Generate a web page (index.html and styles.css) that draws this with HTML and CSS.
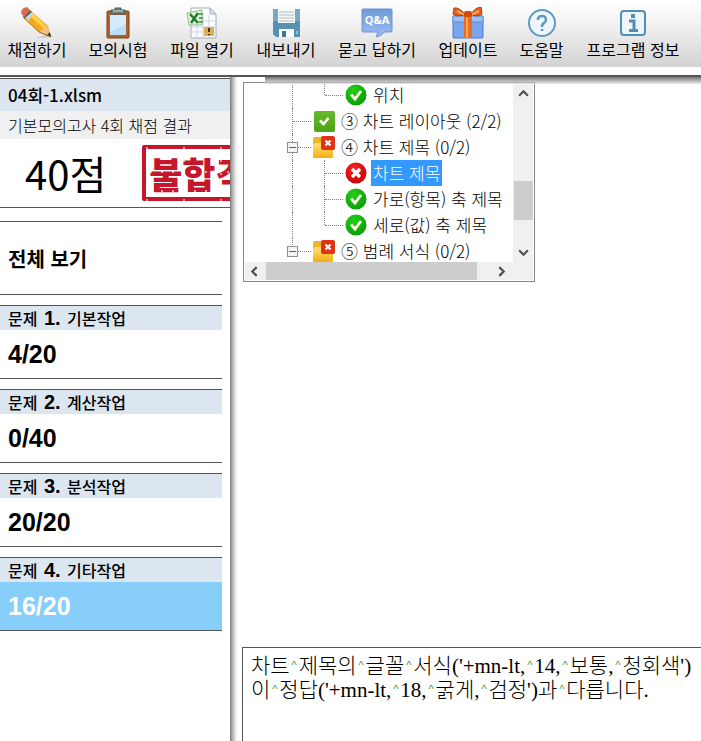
FILE: index.html
```
<!DOCTYPE html>
<html lang="ko">
<head>
  <meta charset="UTF-8"/>
  <meta name="viewport" content="width=device-width, initial-scale=1.0"/>
  <title>채점 결과</title>
  <link rel="stylesheet" href="styles.css">
</head>
<body>
  <!-- shared symbols for the result tree -->
  <svg class="defs" width="0" height="0" aria-hidden="true">
    <defs>
      <radialGradient id="green" cx="40%" cy="30%" r="75%"><stop offset="0" stop-color="#25ce18"/><stop offset="1" stop-color="#079c05"/></radialGradient>
      <radialGradient id="red" cx="40%" cy="30%" r="75%"><stop offset="0" stop-color="#f82424"/><stop offset="1" stop-color="#c90000"/></radialGradient>
      <linearGradient id="folder" x2="0" y2="1"><stop offset="0" stop-color="#ffe27a"/><stop offset="1" stop-color="#f6ac10"/></linearGradient>
      <linearGradient id="leaf" x2="0" y2="1"><stop offset="0" stop-color="#68b82c"/><stop offset="1" stop-color="#4da414"/></linearGradient>
      <symbol id="ok" viewBox="0 0 22 22">
        <circle cx="11" cy="11" r="10.5" fill="url(#green)"/>
        <path d="M6 10.5l4 4.5 6-8" fill="none" stroke="#fffde8" stroke-width="2.8"/>
      </symbol>
      <symbol id="fail" viewBox="0 0 22 22">
        <circle cx="11" cy="11" r="10.5" fill="url(#red)"/>
        <path d="M7 7l8 8M15 7l-8 8" stroke="#fff" stroke-width="3.4"/>
      </symbol>
      <symbol id="ok-box" viewBox="0 0 22 22">
        <rect x="1" y="1" width="21" height="21" rx="2" fill="url(#leaf)"/>
        <path d="M7 10.5l3.5 3.5 5-6" fill="none" stroke="#fff" stroke-width="2.6"/>
      </symbol>
      <symbol id="fail-folder" viewBox="0 0 22 22">
        <path d="M0 3q0-2 2-2h6l2 3h8v17q0 1-1 1H1q-1 0-1-1z" fill="#f0b429"/>
        <path d="M2 7h18v14q0 1-1 1H1q-1 0-1-1V9z" fill="url(#folder)"/>
        <rect x="8" width="14" height="14" rx="2" fill="#e03214"/>
        <path d="M12.500 4.500l5 5M17.500 4.500l-5 5" stroke="#fff" stroke-width="2.200"/>
      </symbol>
    </defs>
  </svg>

  <nav class="toolbar">
    <button>
      <svg viewBox="0 0 32 32">
        <path d="M14 31l18-1-3-3z" fill="#999" opacity=".4"/>
        <path d="M9 3L27 19l3 11-12-5L2 9z" fill="#f6a81c"/>
        <path d="M7 7L24 23l3-2L10 4z" fill="#ffd04d"/>
        <path d="M2 9L9 3l3 3-7 7z" fill="#53656f"/>
        <path d="M4 11L11 5l2 2-6 7z" fill="#cfd6d8"/>
        <path d="M0 6Q0 1 6 0l3 3-6 7z" fill="#dd6b47"/>
        <path d="M18 25l9-6 3 11z" fill="#eac38a"/>
        <path d="M26 28l4 2-1-5z" fill="#333"/>
        <path d="M2 10l16 15 12 5" fill="none" stroke="#a9640e"/>
      </svg>
      채점하기
    </button>
    <button>
      <svg viewBox="0 0 32 32">
        <rect x="5" y="4" width="22" height="27" rx="1" fill="#a9622b" stroke="#7c431a"/>
        <rect x="8" y="8" width="16" height="20" fill="#b9def5"/>
        <path d="M8 8h16v9L8 25z" fill="#d4ecfb"/>
        <path d="M9 3h4V1h6v2h4v4H9z" fill="#6f8285" stroke="#475658"/>
        <path d="M11 4h10" stroke="#c4d0d0"/>
      </svg>
      모의시험
    </button>
    <button>
      <svg viewBox="0 0 32 32">
        <path d="M5 1h19l6 6v24H5z" fill="#fbfcff" stroke="#a5aab5"/>
        <path d="M5 20h25M5 25h25M11 18v13M17 8v23M23 8v23M17 14h13" stroke="#ccd3e6"/>
        <path d="M24 1v6h6z" fill="#dde0e8" stroke="#a5aab5"/>
        <path d="M1 6l15-3v15H3z" fill="#e2f2dc" stroke="#8fbf82"/>
        <path d="M4 7l8 9M12 6l-7 10" stroke="#237b36" stroke-width="2.500"/>
        <path d="M13 7h4M13 11h4M13 15h4" stroke="#5fa55c" stroke-width="2"/>
        <rect x="18" y="20" width="10" height="9" fill="#dcae59"/>
        <path d="M23 21v4M23 27v1" stroke="#4a3209" stroke-width="2"/>
      </svg>
      파일 열기
    </button>
    <button>
      <svg viewBox="0 0 32 32">
        <path d="M3 2h27v28H6l-3-3z" fill="#5791b1"/>
        <path d="M3 2h27v12H3z" fill="#76a9c4"/>
        <rect x="8" y="2" width="17" height="14" fill="#f7fafb"/>
        <path d="M9 5h15M9 8h15M9 11h15M9 14h15" stroke="#aebdc5"/>
        <rect x="9" y="22" width="15" height="8" fill="#fff"/>
        <rect x="12" y="24" width="4" height="6" fill="#3c7698"/>
        <path d="M27 24v3" stroke="#d7eef9"/>
      </svg>
      내보내기
    </button>
    <button>
      <svg viewBox="0 0 32 32">
        <defs><linearGradient id="bubble" x2="0" y2="1"><stop stop-color="#719cd8"/><stop offset="1" stop-color="#9abcf5"/></linearGradient></defs>
        <path d="M2 2h28q1 0 1 1v20q0 2-1 2h-7q-2 4-8 5l2-5H2q-1 0-1-2V3q0-1 1-1z" fill="url(#bubble)" stroke="#6c95cf"/>
        <text x="16" y="17" text-anchor="middle" class="qa">Q&amp;A</text>
      </svg>
      묻고 답하기
    </button>
    <button>
      <svg viewBox="0 0 32 32">
        <rect x="1" y="9" width="30" height="22" rx="1" fill="#78a5ed" stroke="#4e7bca"/>
        <path d="M1 9h30v6H1z" fill="#9cc2fa" stroke="#5e8bd8"/>
        <path d="M12 8h8v23h-8z" fill="#ed6d20"/>
        <path d="M15 9v22" stroke="#ffa05b" stroke-width="2"/>
        <path d="M14 8Q7 0 2 1L1 7l4 2zM18 8q6-8 11-8l1 7-4 2z" fill="#e6601c" stroke="#a9390b"/>
        <path d="M5 4l8 4M27 4l-8 4" stroke="#ffa35f" stroke-width="2"/>
        <rect x="12" y="4" width="8" height="6" rx="2" fill="#d34a11"/>
      </svg>
      업데이트
    </button>
    <button>
      <svg viewBox="0 0 32 32" fill="none" stroke="#5f9cbf">
        <circle cx="16" cy="16" r="13" stroke-width="2" fill="#eff5f8"/>
        <path d="M12 13q0-4 4-4t4 4q0 2-2 3-2 1-2 4M16 22v2" stroke-width="2.600"/>
      </svg>
      도움말
    </button>
    <button>
      <svg viewBox="0 0 32 32" fill="none" stroke="#4f8fb5">
        <rect x="4" y="4" width="24" height="24" rx="3" stroke-width="2" fill="#edf5fa"/>
        <path d="M12 14h5v9M12 23.500h9" stroke-width="3"/>
        <path d="M14 9h4" stroke-width="4"/>
      </svg>
      프로그램 정보
    </button>
  </nav>
  <div class="divider"></div>

  <main>
    <aside>
      <h1>04회-1.xlsm</h1>
      <p class="exam">기본모의고사 4회 채점 결과</p>
      <div class="score">
        <span>40점</span>
        <strong class="stamp">불합격</strong>
      </div>
      <div class="cards">
        <button class="card all">전체 보기</button>
        <button class="card"><span class="title">문제 <b>1.</b> 기본작업</span><span class="value">4/20</span></button>
        <button class="card"><span class="title">문제 <b>2.</b> 계산작업</span><span class="value">0/40</span></button>
        <button class="card"><span class="title">문제 <b>3.</b> 분석작업</span><span class="value">20/20</span></button>
        <button class="card active"><span class="title">문제 <b>4.</b> 기타작업</span><span class="value">16/20</span></button>
      </div>
    </aside>

    <section class="content">
      <div class="tree">
        <ul>
          <li><i class="guide"></i><i class="guide branch end"></i><svg><use href="#ok"/></svg><span>위치</span></li>
          <li><i class="guide branch"></i><svg><use href="#ok-box"/></svg><span>③ 차트 레이아웃 (2/2)</span></li>
          <li><i class="guide branch"><button class="toggle" aria-label="접기"></button></i><svg><use href="#fail-folder"/></svg><span>④ 차트 제목 (0/2)</span></li>
          <li><i class="guide"></i><i class="guide branch"></i><svg><use href="#fail"/></svg><span class="selected">차트 제목</span></li>
          <li><i class="guide"></i><i class="guide branch"></i><svg><use href="#ok"/></svg><span>가로(항목) 축 제목</span></li>
          <li><i class="guide"></i><i class="guide branch end"></i><svg><use href="#ok"/></svg><span>세로(값) 축 제목</span></li>
          <li><i class="guide branch end"><button class="toggle" aria-label="접기"></button></i><svg><use href="#fail-folder"/></svg><span>⑤ 범례 서식 (0/2)</span></li>
        </ul>
        <div class="vbar">
          <button aria-label="위로"><svg viewBox="0 0 10 10"><path d="M1 7l4-4 4 4"/></svg></button>
          <div class="thumb"></div>
          <button aria-label="아래로"><svg viewBox="0 0 10 10"><path d="M1 3l4 4 4-4"/></svg></button>
        </div>
        <div class="hbar">
          <button aria-label="왼쪽"><svg viewBox="0 0 10 10"><path d="M7 1L3 5l4 4"/></svg></button>
          <div class="thumb"></div>
          <button aria-label="오른쪽"><svg viewBox="0 0 10 10"><path d="M3 1l4 4-4 4"/></svg></button>
        </div>
      </div>
      <div class="comment">
        차트<i>^</i>제목의<i>^</i>글꼴<i>^</i>서식('+mn-lt,<i>^</i>14,<i>^</i>보통,<i>^</i>청회색')<br>
        이<i>^</i>정답('+mn-lt,<i>^</i>18,<i>^</i>굵게,<i>^</i>검정')과<i>^</i>다릅니다.
      </div>
    </section>
  </main>
</body>
</html>
```
FILE: styles.css
```
* { box-sizing:border-box; }
body { margin:0; height:100vh; display:flex; flex-direction:column; overflow:hidden; background:#fff; color:#000; font-family:"Noto Sans CJK KR", sans-serif; }
button { font:inherit; color:inherit; border:none; background:none; padding:0; cursor:pointer; }
.defs { position:absolute; }

/* toolbar */
.toolbar { flex:none; display:grid; grid-template-columns:60px 60px 66px 60px 80px 60px 45px 96px; column-gap:21px; padding:7px 7px 8px; background:linear-gradient(#fff, #f4f4f4 30%, #d3d3d3); }
.toolbar button { display:flex; flex-direction:column; align-items:center; font-size:16px; line-height:20px; white-space:nowrap; }
.toolbar svg { width:32px; height:32px; }
.qa { font:bold 11px "Open Sans", sans-serif; fill:#fff; }
.divider { flex:none; height:10px; border-bottom:2px solid #555; }

main { flex:1; display:flex; min-height:0; }

/* left panel */
aside { flex:none; width:230px; overflow:hidden; padding-top:1px; }
h1 { margin:0; padding-left:8px; border-top:1px solid #555; font-size:17px; line-height:32px; font-weight:500; background:#dce6f0; }
.exam { margin:0; padding-left:8px; font-size:16px; line-height:28px; font-weight:300; background:#f0f0f0; }
.score { height:69px; display:flex; align-items:center; gap:36px; padding-left:25px; border-bottom:1px solid #555; white-space:nowrap; }
.score span { font-size:40px; line-height:64px; }
.stamp { position:relative; flex:none; padding:0 3px; border:4px solid #c5162b; border-radius:2px; color:#c5162b; font-size:36px; line-height:48px; font-weight:900; }
/* worn ink specks */
.stamp::after { content:""; position:absolute; inset:-4px; background:radial-gradient(circle at 5px 3px, #fff8 0 1px, transparent 1px) 0 0/37px 13px, radial-gradient(circle at 9px 8px, #fff9 0 1px, transparent 1px) 0 0/11px 19px; }
.cards { width:222px; display:flex; flex-direction:column; gap:10px; padding-top:13px; }
.card { display:flex; flex-direction:column; height:74px; border:solid #555; border-width:1px 0; text-align:left; }
.card.all { justify-content:center; padding-left:8px; font-size:20px; font-weight:bold; }
.title { width:100%; height:24px; padding-left:8px; background:#dce6f0; font-size:16px; line-height:24px; font-weight:500; }
.title b { margin:0 2px; font-family:"Liberation Sans", sans-serif; font-size:20px; }
.value { width:100%; padding-left:8px; font:bold 25px/48px "Liberation Sans", sans-serif; }
.active .value { background:#87cefa; color:#fff; }

/* right panel */
.content { position:relative; flex:1; min-width:0; display:flex; flex-direction:column; justify-content:space-between; padding:5px 0 0 12px; background:linear-gradient(90deg, #777, #aaa 2px, #eee 6px, #fff 8px) no-repeat; }
.content::before { content:""; position:absolute; z-index:1; left:35px; right:0; top:0; height:7px; background:linear-gradient(#777, #aaa 3px, #ddd8 7px); }
.tree { width:292px; margin-left:1px; border:1px solid #828790; padding:1px; display:grid; grid-template-columns:1fr 20px; grid-template-rows:178px 18px; background:#fff; }
.tree ul { display:flex; flex-direction:column; justify-content:center; height:178px; margin:0; padding:0 0 0 31px; list-style:none; overflow:hidden; }
.tree li { flex:none; display:flex; align-items:center; height:26px; font-size:17px; line-height:26px; font-weight:300; white-space:nowrap; }
.tree li svg { width:22px; height:22px; margin:0 4px 0 5px; }
.tree li span { padding:0 2px; }
.tree .selected { background:#3399ff; color:#fff; }
.guide { position:relative; width:32px; height:26px; }
.guide::before { content:""; position:absolute; left:16px; top:0; height:26px; border-left:1px dotted #808080; }
.guide.end::before { height:13px; }
.branch::after { content:""; position:absolute; left:17px; top:13px; width:18px; border-top:1px dotted #808080; }
.toggle { position:absolute; z-index:1; left:11px; top:8px; width:11px; height:11px; border:1px solid #919191; background:linear-gradient(#4b63a7, #4b63a7) center/7px 1px no-repeat #f4f4f4; }
.vbar, .hbar { display:flex; align-items:center; background:#f0f0f0; }
.vbar { flex-direction:column; }
.vbar button, .hbar button { display:flex; align-items:center; justify-content:center; width:19px; height:19px; }
.vbar svg, .hbar svg { width:11px; height:11px; fill:none; stroke:#505050; stroke-width:2; }
.thumb { background:#cdcdcd; }
.vbar .thumb { width:19px; height:39px; margin:auto 0 23px; }
.hbar { grid-column:1 / 3; }
.hbar .thumb { flex:none; width:211px; height:18px; margin-left:2px; }
.hbar button:last-child { margin-left:15px; }

.comment { height:94px; border:solid #555; border-width:1px 0 0 1px; padding:6px 8px; font-family:"Liberation Serif", "Noto Sans CJK KR", serif; font-size:21px; line-height:24px; font-weight:300; white-space:nowrap; }
.comment i { display:inline-block; width:9px; height:12px; overflow:hidden; font:normal 11px/12px "Liberation Sans", sans-serif; text-align:center; color:#3a9a3a; vertical-align:2px; }
```
